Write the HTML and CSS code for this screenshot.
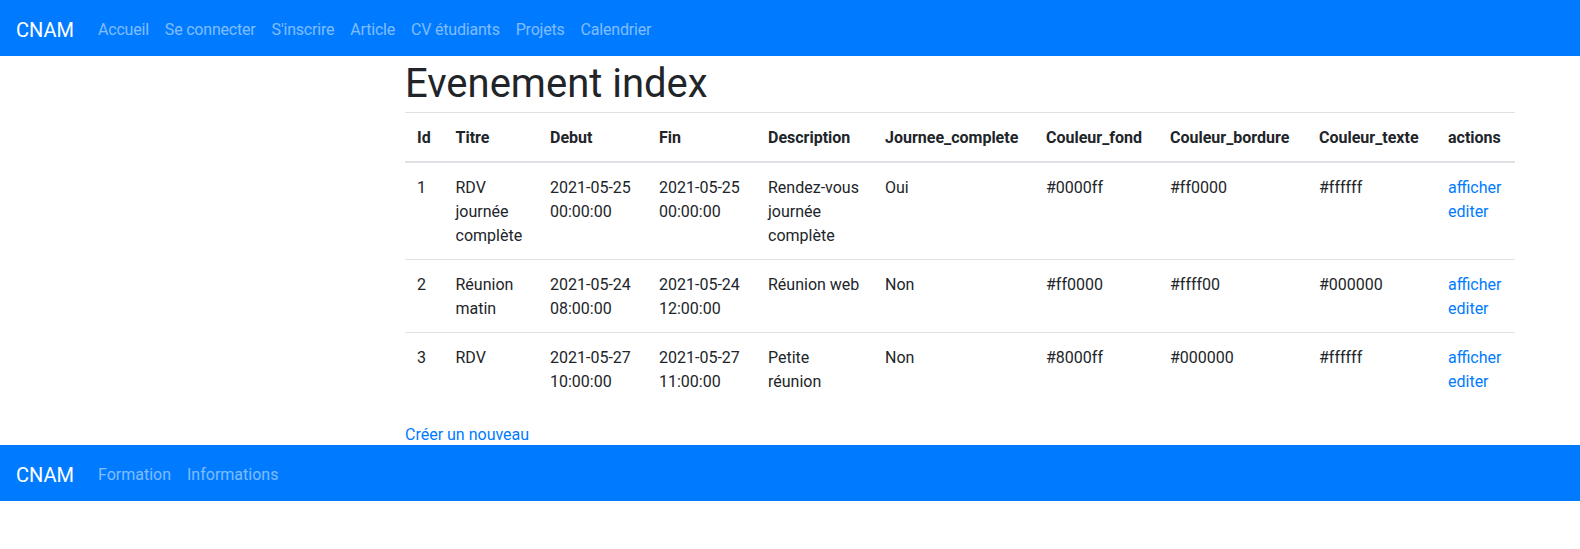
FILE: index.html
```html
<!DOCTYPE html>
<html lang="fr">
<head>
<meta charset="utf-8">
<title>Evenement index</title>
<link rel="stylesheet" href="styles.css">
</head>
<body>
<nav class="navbar">
  <a class="brand" href="#">CNAM</a>
  <ul class="nav nav-tight">
    <li><a class="nav-link" href="#">Accueil</a></li>
    <li><a class="nav-link" href="#">Se connecter</a></li>
    <li><a class="nav-link" href="#">S'inscrire</a></li>
    <li><a class="nav-link" href="#">Article</a></li>
    <li><a class="nav-link" href="#">CV étudiants</a></li>
    <li><a class="nav-link" href="#">Projets</a></li>
    <li><a class="nav-link" href="#">Calendrier</a></li>
  </ul>
</nav>

<main class="content">
  <h1 class="title">Evenement index</h1>
  <table class="table">
    <colgroup>
      <col class="c-id"><col class="c-titre"><col class="c-debut"><col class="c-fin"><col class="c-desc">
      <col class="c-jc"><col class="c-fond"><col class="c-bord"><col class="c-texte"><col class="c-act">
    </colgroup>
    <thead>
      <tr>
        <th>Id</th><th>Titre</th><th>Debut</th><th>Fin</th><th>Description</th>
        <th>Journee_complete</th><th>Couleur_fond</th><th>Couleur_bordure</th><th>Couleur_texte</th><th>actions</th>
      </tr>
    </thead>
    <tbody>
      <tr>
        <td>1</td><td>RDV journée complète</td><td>2021-05-25 00:00:00</td><td>2021-05-25 00:00:00</td>
        <td>Rendez-vous journée complète</td><td>Oui</td><td>#0000ff</td><td>#ff0000</td><td>#ffffff</td>
        <td><a href="#">afficher</a><br><a href="#">editer</a></td>
      </tr>
      <tr>
        <td>2</td><td>Réunion matin</td><td>2021-05-24 08:00:00</td><td>2021-05-24 12:00:00</td>
        <td class="nowrap">Réunion web</td><td>Non</td><td>#ff0000</td><td>#ffff00</td><td>#000000</td>
        <td><a href="#">afficher</a><br><a href="#">editer</a></td>
      </tr>
      <tr>
        <td>3</td><td>RDV</td><td>2021-05-27 10:00:00</td><td>2021-05-27 11:00:00</td>
        <td>Petite réunion</td><td>Non</td><td>#8000ff</td><td>#000000</td><td>#ffffff</td>
        <td><a href="#">afficher</a><br><a href="#">editer</a></td>
      </tr>
    </tbody>
  </table>
  <a class="create" href="#">Créer un nouveau</a>
</main>

<footer class="navbar">
  <a class="brand" href="#">CNAM</a>
  <ul class="nav">
    <li><a class="nav-link" href="#">Formation</a></li>
    <li><a class="nav-link" href="#">Informations</a></li>
  </ul>
</footer>
</body>
</html>
```

FILE: styles.css
```css
* { box-sizing: border-box; }

body {
  margin: 0;
  font-family: "Segoe UI", Roboto, "Liberation Sans", sans-serif;
  font-size: 16px;
  line-height: 1.5;
  color: #212529;
  background: #fff;
}

a { color: #007bff; text-decoration: none; }

.navbar {
  display: flex;
  align-items: center;
  background: #007bff;
  padding: 10px 16px 6px;
  height: 56px;
}

.brand {
  color: #fff;
  font-size: 20px;
  line-height: 30px;
  padding: 5px 0;
  margin-right: 16px;
}

.nav {
  display: flex;
  list-style: none;
  margin: 0;
  padding: 0;
}

.nav-link {
  display: block;
  padding: 8px;
  color: rgba(255, 255, 255, 0.5);
}

.nav-tight .nav-link { letter-spacing: -0.2px; }

.content {
  margin-left: 405px;
  width: 1110px;
}

.title {
  margin: 0 0 4px;
  padding-top: 4px;
  font-size: 40px;
  font-weight: 400;
  line-height: 1.2;
}

.table {
  width: 100%;
  table-layout: fixed;
  border-collapse: collapse;
  margin-bottom: 16px;
}

.table th,
.table td {
  padding: 13px 12px 11px;
  vertical-align: top;
  text-align: left;
  border-top: 1px solid #dee2e6;
}

.table thead th {
  border-bottom: 2px solid #dee2e6;
  font-weight: bold;
}

.nowrap { white-space: nowrap; }

.c-id { width: 38.5px; }
.c-titre { width: 94.5px; }
.c-debut { width: 109px; }
.c-fin { width: 109px; }
.c-desc { width: 117px; }
.c-jc { width: 161px; }
.c-fond { width: 124px; }
.c-bord { width: 149px; }
.c-texte { width: 129px; }
.c-act { width: 79px; }

.create {
  display: block;
  width: fit-content;
  padding-top: 2px;
  margin-bottom: -2px;
}
```
